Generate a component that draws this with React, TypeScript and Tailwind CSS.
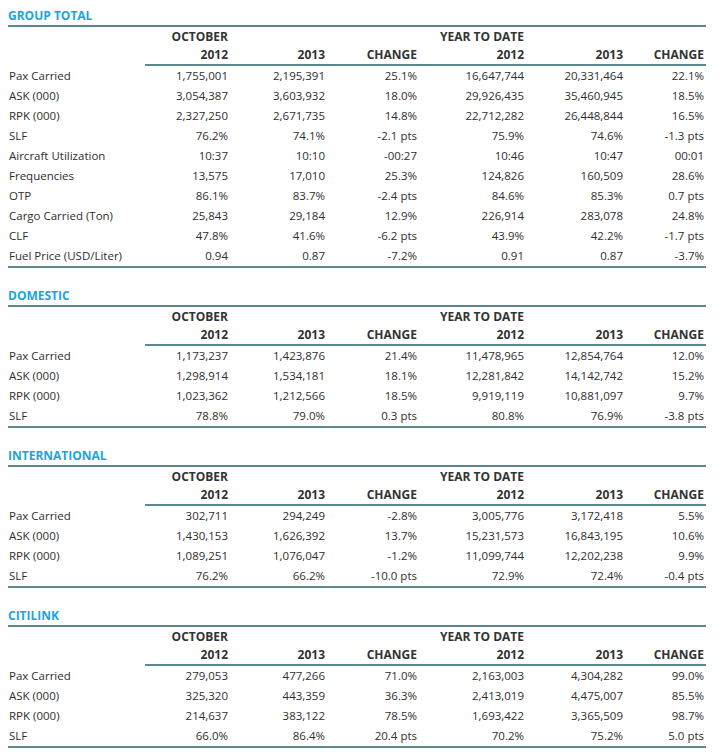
type Row = [string, string, string, string, string, string, string]

interface Section {
  title: string
  rows: Row[]
}

const SECTIONS: Section[] = [
  {
    title: 'GROUP TOTAL',
    rows: [
      ['Pax Carried', '1,755,001', '2,195,391', '25.1%', '16,647,744', '20,331,464', '22.1%'],
      ['ASK (000)', '3,054,387', '3,603,932', '18.0%', '29,926,435', '35,460,945', '18.5%'],
      ['RPK (000)', '2,327,250', '2,671,735', '14.8%', '22,712,282', '26,448,844', '16.5%'],
      ['SLF', '76.2%', '74.1%', '-2.1 pts', '75.9%', '74.6%', '-1.3 pts'],
      ['Aircraft Utilization', '10:37', '10:10', '-00:27', '10:46', '10:47', '00:01'],
      ['Frequencies', '13,575', '17,010', '25.3%', '124,826', '160,509', '28.6%'],
      ['OTP', '86.1%', '83.7%', '-2.4 pts', '84.6%', '85.3%', '0.7 pts'],
      ['Cargo Carried (Ton)', '25,843', '29,184', '12.9%', '226,914', '283,078', '24.8%'],
      ['CLF', '47.8%', '41.6%', '-6.2 pts', '43.9%', '42.2%', '-1.7 pts'],
      ['Fuel Price (USD/Liter)', '0.94', '0.87', '-7.2%', '0.91', '0.87', '-3.7%'],
    ],
  },
  {
    title: 'DOMESTIC',
    rows: [
      ['Pax Carried', '1,173,237', '1,423,876', '21.4%', '11,478,965', '12,854,764', '12.0%'],
      ['ASK (000)', '1,298,914', '1,534,181', '18.1%', '12,281,842', '14,142,742', '15.2%'],
      ['RPK (000)', '1,023,362', '1,212,566', '18.5%', '9,919,119', '10,881,097', '9.7%'],
      ['SLF', '78.8%', '79.0%', '0.3 pts', '80.8%', '76.9%', '-3.8 pts'],
    ],
  },
  {
    title: 'INTERNATIONAL',
    rows: [
      ['Pax Carried', '302,711', '294,249', '-2.8%', '3,005,776', '3,172,418', '5.5%'],
      ['ASK (000)', '1,430,153', '1,626,392', '13.7%', '15,231,573', '16,843,195', '10.6%'],
      ['RPK (000)', '1,089,251', '1,076,047', '-1.2%', '11,099,744', '12,202,238', '9.9%'],
      ['SLF', '76.2%', '66.2%', '-10.0 pts', '72.9%', '72.4%', '-0.4 pts'],
    ],
  },
  {
    title: 'CITILINK',
    rows: [
      ['Pax Carried', '279,053', '477,266', '71.0%', '2,163,003', '4,304,282', '99.0%'],
      ['ASK (000)', '325,320', '443,359', '36.3%', '2,413,019', '4,475,007', '85.5%'],
      ['RPK (000)', '214,637', '383,122', '78.5%', '1,693,422', '3,365,509', '98.7%'],
      ['SLF', '66.0%', '86.4%', '20.4 pts', '70.2%', '75.2%', '5.0 pts'],
    ],
  },
]

const GRID = 'grid grid-cols-[137px_85px_97px_92px_107px_99px_81px]'
const HEAD = ['2012', '2013', 'CHANGE', '2012', '2013', 'CHANGE']

function StatTable({ section, first }: { section: Section; first: boolean }) {
  return (
    <div className={first ? '' : 'mt-[13px]'}>
      <div className="border-b-2 border-[#5b8b91] pt-[5px] text-[12px] font-bold leading-[19px] text-[#1aa5de]">
        {section.title}
      </div>
      <div className="border-b-2 border-[#5b8b91]">
        <div className={`${GRID} h-[19px] items-center text-[12px] font-bold text-[#333333]`}>
          <div />
          <div className="pr-[2px] text-right">OCTOBER</div>
          <div />
          <div />
          <div className="whitespace-nowrap pr-[2px] text-right">YEAR TO DATE</div>
          <div />
          <div />
        </div>
        <div className={`${GRID} text-[12px] font-bold text-[#333333]`}>
          <div />
          {HEAD.map((h, i) => (
            <div
              key={i}
              className="flex h-[20px] items-center justify-end border-b-2 border-[#5b8b91] pr-[2px]"
            >
              {h}
            </div>
          ))}
        </div>
        {section.rows.map((row) => (
          <div key={row[0]} className={`${GRID} h-[20px] items-center text-[11.5px] text-[#2e2e2e]`}>
            {row.map((cell, i) => (
              <div key={i} className={i === 0 ? 'whitespace-nowrap pl-[1px]' : 'pr-[2px] text-right'}>
                {cell}
              </div>
            ))}
          </div>
        ))}
      </div>
    </div>
  )
}

export default function App() {
  return (
    <div className="h-[755px] w-[724px] bg-white pt-[1px] pl-[8px] font-['Open_Sans',sans-serif]">
      <div className="w-[698px]">
        {SECTIONS.map((s, i) => (
          <StatTable key={s.title} section={s} first={i === 0} />
        ))}
      </div>
    </div>
  )
}
